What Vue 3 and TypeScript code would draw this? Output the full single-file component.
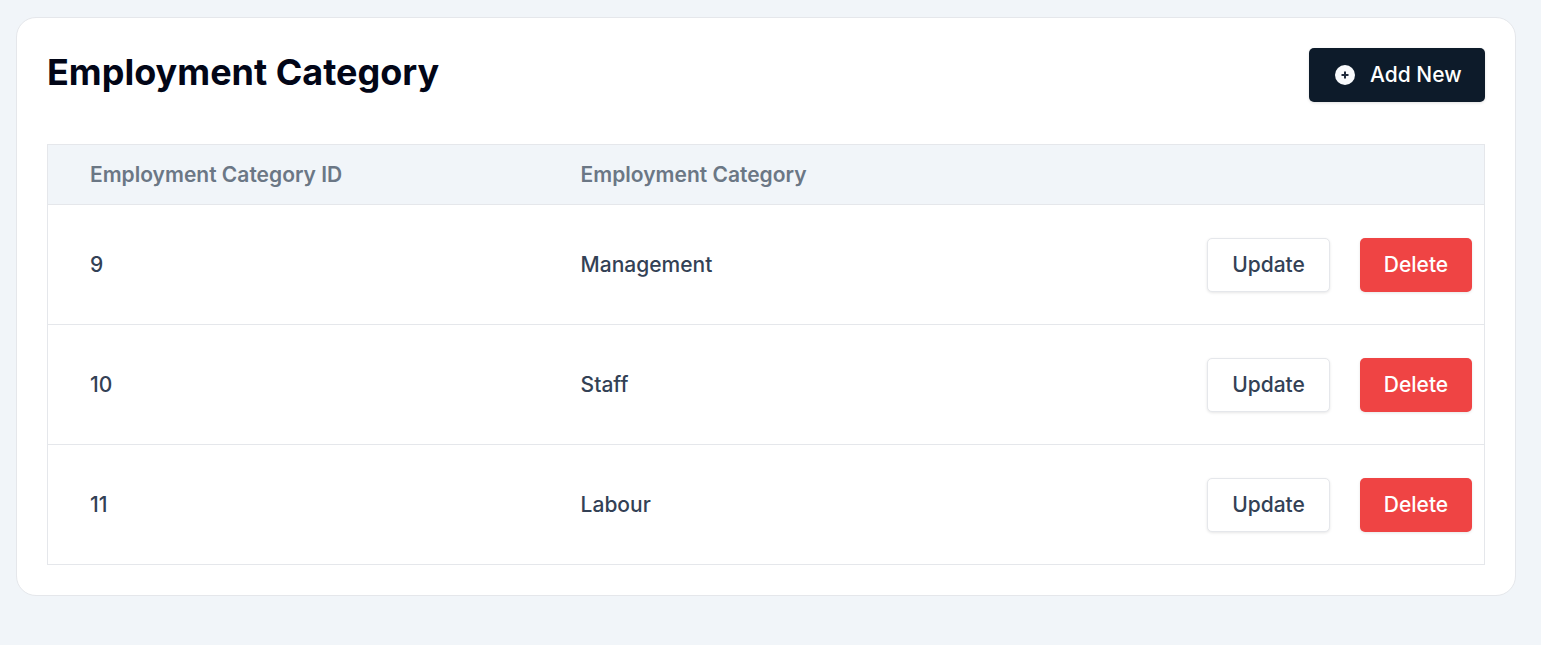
<script setup lang="ts">
interface Row { id: number; name: string }
const rows: Row[] = [
  { id: 9, name: 'Management' },
  { id: 10, name: 'Staff' },
  { id: 11, name: 'Labour' },
]
</script>

<template>
  <main class="page">
    <section class="card">
      <header class="head">
        <h1 class="title">Employment Category</h1>
        <button class="add" type="button">
          <svg class="add-icon" viewBox="0 0 20 20" width="20" height="20" aria-hidden="true">
            <circle cx="10" cy="10" r="10" fill="#f8fafc" />
            <path d="M10 6.5v7M6.5 10h7" stroke="#1e293b" stroke-width="2" fill="none" />
          </svg>
          <span>Add New</span>
        </button>
      </header>
      <div class="table">
        <div class="row row-head">
          <div class="cell-id">Employment Category ID</div>
          <div class="cell-name">Employment Category</div>
        </div>
        <div v-for="r in rows" :key="r.id" class="row row-body">
          <div class="cell-id">{{ r.id }}</div>
          <div class="cell-name">{{ r.name }}</div>
          <div class="actions">
            <button class="btn update" type="button">Update</button>
            <button class="btn delete" type="button">Delete</button>
          </div>
        </div>
      </div>
    </section>
  </main>
</template>

<style>
html, body { margin: 0; background: #f1f5f9; }
</style>

<style scoped>
.page {
  box-sizing: border-box;
  height: 645px;
  padding: 17px 25px 0 16px;
  background: #f1f5f9;
  font-family: Inter, "Liberation Sans", sans-serif;
}
.card {
  box-sizing: border-box;
  height: 579px;
  padding: 30px;
  background: #fff;
  border: 1px solid #e5e7eb;
  border-radius: 20px;
}
.head {
  display: flex;
  justify-content: space-between;
  align-items: flex-start;
  height: 96px;
}
.title {
  margin: 0;
  font-size: 36px;
  line-height: 48px;
  font-weight: 700;
  color: #020617;
}
.add {
  display: flex;
  align-items: center;
  gap: 15px;
  box-sizing: border-box;
  width: 176px;
  height: 54px;
  padding: 0 0 2px 26px;
  border: 0;
  border-radius: 5px;
  background: #0d1b2a;
  color: #fff;
  font: 500 21px Inter, sans-serif;
  box-shadow: 0 1px 3px rgba(0, 0, 0, 0.12);
}
.add-icon { flex: none; margin-top: 2px; }
.table {
  border: 1px solid #e5e7eb;
}
.row {
  display: flex;
  align-items: center;
  box-sizing: border-box;
  padding-left: 42px;
}
.row-head {
  height: 59px;
  background: #f1f5f9;
  color: #6b7785;
  font-size: 21px;
  font-weight: 600;
}
.row-body {
  height: 120px;
  border-top: 1px solid #e5e7eb;
  color: #334155;
  font-size: 21px;
  font-weight: 500;
}
.cell-id { width: 490.6px; flex: none; }
.cell-name { flex: 1; }
.actions {
  display: flex;
  gap: 30px;
  padding-right: 12px;
}
.btn {
  box-sizing: border-box;
  height: 54px;
  border-radius: 5px;
  font: 500 21px Inter, sans-serif;
  box-shadow: 0 1px 3px rgba(0, 0, 0, 0.1);
}
.update {
  width: 123px;
  background: #fff;
  color: #334155;
  border: 1px solid #e5e7eb;
}
.delete {
  width: 112px;
  background: #ef4444;
  color: #fff;
  border: 0;
}
</style>
